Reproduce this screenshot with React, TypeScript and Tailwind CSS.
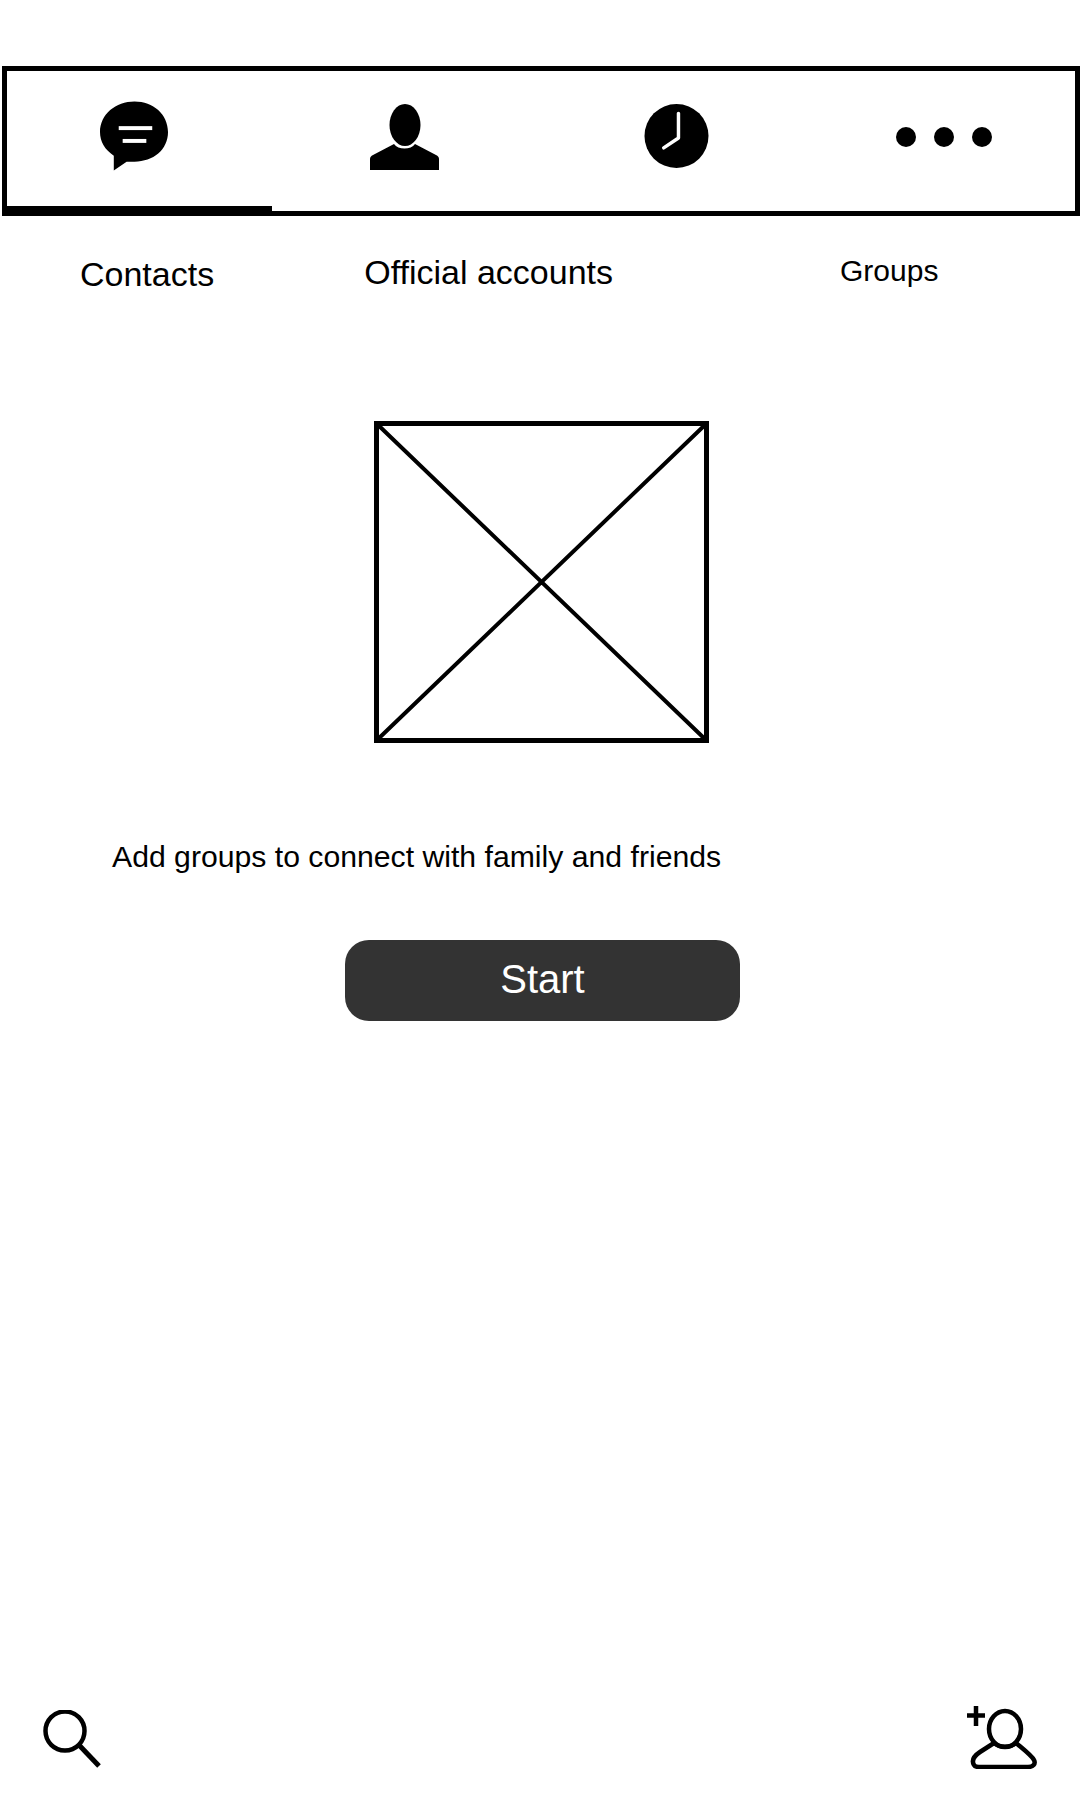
function ChatIcon() {
  return (
    <svg width="69" height="70" viewBox="0 0 70 70" className="block">
      <path d="M35 0C54 0 69 13 69 31C69 49 54 61 35 61C32 61 29 61 27 61L14 70V55C5 49 0 41 0 31C0 13 16 0 35 0Z" fill="#000" />
      <rect x="19" y="25" width="34" height="4" fill="#fff" />
      <rect x="23" y="38" width="24" height="4" fill="#fff" />
    </svg>
  )
}

function PersonIcon() {
  return (
    <svg width="69" height="66" viewBox="0 0 69 66" className="block">
      <ellipse cx="35" cy="21" rx="15.5" ry="21" fill="#000" />
      <path d="M0 55C0 53 1 52 3 51L24 40C28 46 41 46 45 40L66 51C68 52 69 53 69 55V66H0Z" fill="#000" />
    </svg>
  )
}

function ClockIcon() {
  return (
    <svg width="65" height="66" viewBox="0 0 66 66" className="block">
      <circle cx="33" cy="33" r="32.5" fill="#000" />
      <path d="M35 10V35L20 45" fill="none" stroke="#fff" strokeWidth="3.5" strokeLinecap="round" strokeLinejoin="round" />
    </svg>
  )
}

function DotsIcon() {
  return (
    <div className="mt-[24px] flex gap-[18px]">
      <div className="h-5 w-5 rounded-full bg-black" />
      <div className="h-5 w-5 rounded-full bg-black" />
      <div className="h-5 w-5 rounded-full bg-black" />
    </div>
  )
}

function SearchIcon() {
  return (
    <svg width="59" height="59" viewBox="0 0 59 59" className="block">
      <circle cx="22" cy="21" r="19.5" fill="none" stroke="#000" strokeWidth="4.5" />
      <path d="M36 35L56 56" fill="none" stroke="#000" strokeWidth="5" />
    </svg>
  )
}

function AddPersonIcon() {
  return (
    <svg width="70" height="68" viewBox="0 0 70 68" className="block">
      <path d="M0 14.5H18M9 5V25" fill="none" stroke="#000" strokeWidth="4.5" />
      <ellipse cx="38" cy="28" rx="16" ry="18" fill="none" stroke="#000" strokeWidth="4.5" />
      <path d="M27 42L13 51C7 55 4 59 7 64C8 66 10 66 12 66H61C66 66 69 63 67 59C65 55 61 52 49 42C43 47 33 47 27 42Z" fill="none" stroke="#000" strokeWidth="4.5" strokeLinejoin="round" />
    </svg>
  )
}

export default function App() {
  return (
    <div className="flex h-[1800px] w-[1080px] flex-col bg-white pt-[66px] pl-[2px] font-['Liberation_Sans',sans-serif] text-black">
      <div className="flex h-[150px] w-[1078px] border-[5px] border-black">
        <div className="h-full w-[265px] border-b-[5px] border-black pt-[30px] pl-[93px]">
          <ChatIcon />
        </div>
        <div className="w-[272px] pt-[33px] pl-[98px]">
          <PersonIcon />
        </div>
        <div className="w-[271px] pt-[32px] pl-[100px]">
          <ClockIcon />
        </div>
        <div className="pt-[32px] pl-[81px]">
          <DotsIcon />
        </div>
      </div>

      <div className="mt-[36px] flex h-[44px] items-start">
        <span className="ml-[78px] text-[34px] leading-[44px]">Contacts</span>
        <span className="mt-[-2px] ml-[150px] text-[34px] leading-[44px]">Official accounts</span>
        <span className="mt-[-3px] ml-[227px] text-[30px] leading-[44px]">Groups</span>
      </div>

      <svg width="335" height="322" viewBox="0 0 335 322" className="mt-[125px] ml-[372px] block">
        <rect x="2.5" y="2.5" width="330" height="317" fill="none" stroke="#000" strokeWidth="5" />
        <path d="M2 2L333 320M333 2L2 320" stroke="#000" strokeWidth="4" />
      </svg>

      <p className="mt-[96px] ml-[110px] text-[30.2px] leading-[36px]">Add groups to connect with family and friends</p>

      <button className="mt-[65px] ml-[343px] h-[81px] w-[395px] rounded-[24px] bg-[#333333] pb-[4px] text-center text-[40px] text-white">
        Start
      </button>

      <div className="mt-auto mb-[31px] flex items-end justify-between pr-[43px] pl-[41px]">
        <SearchIcon />
        <AddPersonIcon />
      </div>
    </div>
  )
}
